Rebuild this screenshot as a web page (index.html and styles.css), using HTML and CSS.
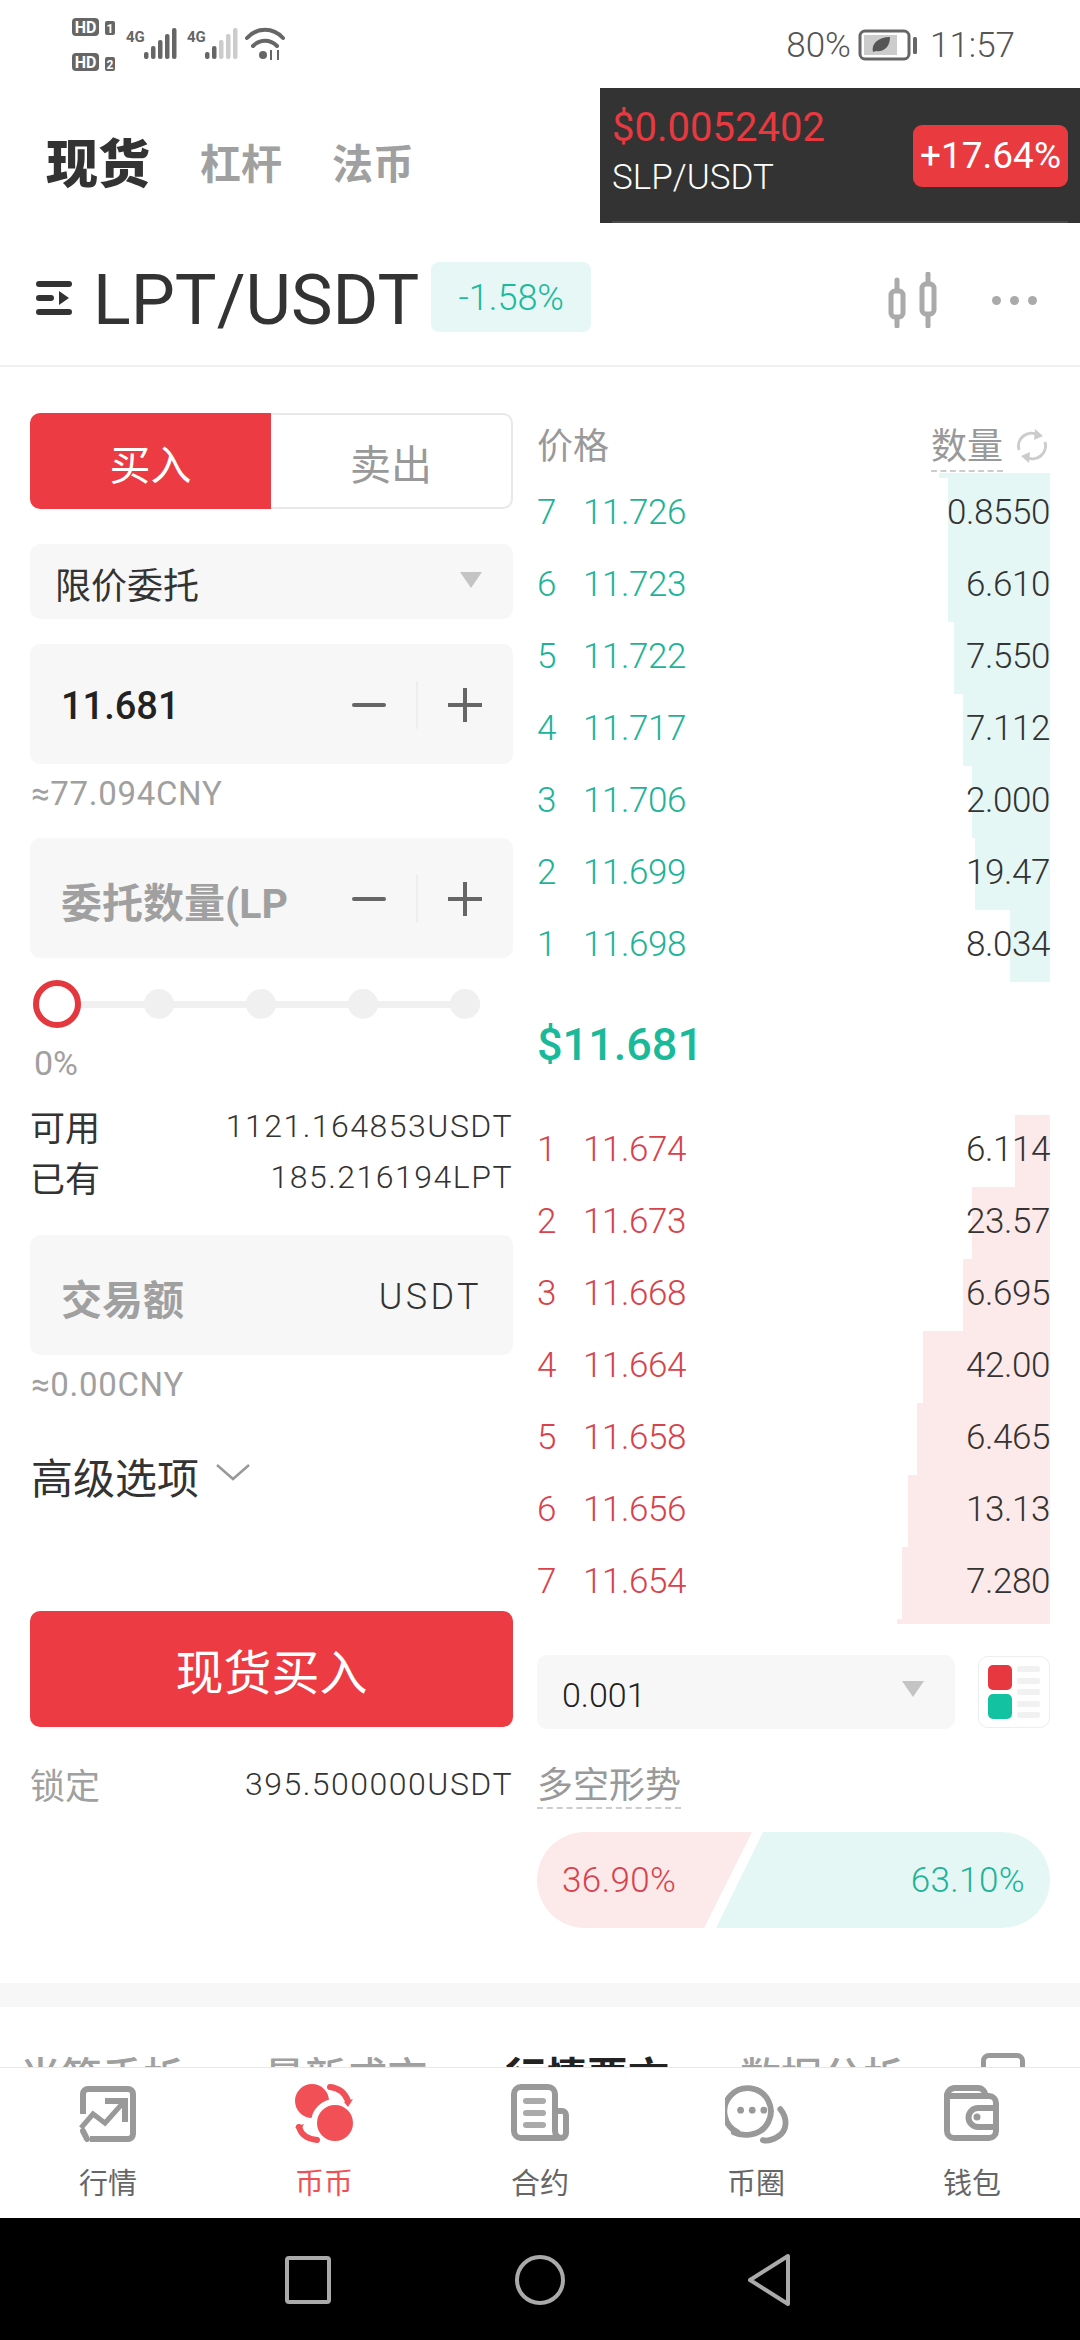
FILE: index.html
```html
<!DOCTYPE html>
<html lang="zh-CN">
<head>
  <meta charset="UTF-8" />
  <meta name="viewport" content="width=device-width, initial-scale=1.0"/>
  <title>LPT/USDT 现货</title>
  <link rel="stylesheet" href="styles.css">
</head>
<body>
  <!-- 状态栏 -->
  <div class="status-bar">
    <svg class="status-left" width="216" height="62" viewBox="0 0 216 62">
      <rect x="0" y="3" width="27" height="18" rx="4" fill="#666"/>
      <text x="13.5" y="17.5" class="hd-text">HD</text>
      <rect x="33" y="6" width="10" height="14" rx="2" fill="#666"/>
      <text x="38" y="17.5" class="sim-text">1</text>
      <rect x="0" y="38" width="27" height="18" rx="4" fill="#666"/>
      <text x="13.5" y="52.5" class="hd-text">HD</text>
      <rect x="33" y="42" width="10" height="14" rx="2" fill="#666"/>
      <text x="38" y="53.5" class="sim-text">2</text>
      <text x="54" y="27" class="net-text">4G</text>
      <g fill="#666">
        <rect x="72" y="37" width="4.5" height="7" rx="2"/>
        <rect x="79" y="31" width="4.5" height="13" rx="2"/>
        <rect x="86" y="25" width="4.5" height="19" rx="2"/>
        <rect x="93" y="19" width="4.5" height="25" rx="2"/>
        <rect x="100" y="13" width="4.5" height="31" rx="2"/>
      </g>
      <text x="115" y="27" class="net-text">4G</text>
      <rect x="133" y="37" width="4.5" height="7" rx="2" fill="#666"/>
      <rect x="140" y="31" width="4.5" height="13" rx="2" fill="#666"/>
      <g fill="#ccc">
        <rect x="147" y="25" width="4.5" height="19" rx="2"/>
        <rect x="154" y="19" width="4.5" height="25" rx="2"/>
        <rect x="161" y="13" width="4.5" height="31" rx="2"/>
      </g>
      <g fill="none" stroke="#666" stroke-width="4" stroke-linecap="round">
        <path d="M175 23C185 12 201 12 211 23"/>
        <path d="M181 31C188 24 198 24 205 31"/>
      </g>
      <circle cx="191" cy="40" r="4" fill="#666"/>
      <path d="M199 35v10M206 35v10" stroke="#666" stroke-width="2"/>
    </svg>
    <div class="status-right">
      <span>80%</span>
      <svg width="60" height="32" viewBox="0 0 60 32">
        <rect x="2" y="2" width="49" height="28" rx="5" fill="none" stroke="#666" stroke-width="3"/>
        <rect x="6" y="6" width="33" height="20" fill="#ccc"/>
        <path d="M15 23C13 15 20 8 32 8C32 18 26 23 18 22Z" fill="#555"/>
        <rect x="55" y="8" width="4" height="17" rx="1.5" fill="#666"/>
      </svg>
      <span class="status-time">11:57</span>
    </div>
  </div>

  <!-- 交易类型 + 悬浮行情 -->
  <div class="top-row">
    <div class="type-tabs">
      <span class="type-tab active">现货</span>
      <span class="type-tab">杠杆</span>
      <span class="type-tab">法币</span>
    </div>
    <div class="float-ticker">
      <div class="float-left">
        <div class="float-price">$0.0052402</div>
        <div class="float-pair">SLP/USDT</div>
      </div>
      <div class="float-change">+17.64%</div>
    </div>
  </div>

  <!-- 交易对 -->
  <div class="pair-row">
    <svg class="pair-menu" width="36" height="36" viewBox="0 0 36 36">
      <path d="M3 4H33M3 32H33M3 18H15" stroke="#333" stroke-width="6" stroke-linecap="round"/>
      <path d="M23 11L33 18L23 25Z" fill="#333"/>
    </svg>
    <span class="pair-name">LPT/USDT</span>
    <span class="pair-change">-1.58%</span>
    <svg class="pair-candle" width="50" height="56" viewBox="0 0 50 56">
      <g fill="none" stroke="#aaa" stroke-width="5" stroke-linecap="round">
        <path d="M9 8V54M40 2V54"/>
      </g>
      <g fill="#fff" stroke="#aaa" stroke-width="5">
        <rect x="3" y="19" width="12" height="26" rx="4"/>
        <rect x="34" y="12" width="12" height="30" rx="4"/>
      </g>
    </svg>
    <span class="pair-more"><i></i><i></i><i></i></span>
  </div>

  <div class="main">
    <div class="trade-area">
      <!-- 左侧下单 -->
      <div class="order-form">
        <div class="side-tabs">
          <div class="side-tab buy">买入</div>
          <div class="side-tab sell">卖出</div>
        </div>
        <div class="select-box order-type">
          <span>限价委托</span>
          <i class="arrow-down"></i>
        </div>
        <div class="input-box">
          <span class="input-value">11.681</span>
          <span class="stepper"><i class="minus"></i><i class="step-line"></i><i class="plus"></i></span>
        </div>
        <div class="hint">≈77.094CNY</div>
        <div class="input-box qty-box">
          <span class="input-holder">委托数量(LP</span>
          <span class="stepper"><i class="minus"></i><i class="step-line"></i><i class="plus"></i></span>
        </div>
        <div class="slider">
          <i class="slider-thumb"></i>
          <i class="slider-dot"></i>
          <i class="slider-dot"></i>
          <i class="slider-dot"></i>
          <i class="slider-dot"></i>
        </div>
        <div class="slider-label">0%</div>
        <div class="balance-row first"><span>可用</span><span class="balance-num">1121.164853USDT</span></div>
        <div class="balance-row"><span>已有</span><span class="balance-num">185.216194LPT</span></div>
        <div class="input-box total-box">
          <span class="input-holder">交易额</span>
          <span class="input-unit">USDT</span>
        </div>
        <div class="hint">≈0.00CNY</div>
        <div class="advanced">
          <span>高级选项</span>
          <svg width="36" height="20" viewBox="0 0 36 20"><path d="M2 3L18 17L34 3" fill="none" stroke="#999" stroke-width="2.5"/></svg>
        </div>
        <div class="submit-btn">现货买入</div>
        <div class="balance-row locked"><span class="locked-label">锁定</span><span class="balance-num">395.500000USDT</span></div>
      </div>

      <!-- 右侧盘口 -->
      <div class="book">
        <div class="book-head">
          <span class="book-head-label">价格</span>
          <span class="book-head-right">
            <span class="dashed book-head-label">数量</span>
            <svg width="32" height="34" viewBox="0 0 32 34">
              <g fill="none" stroke="#ccc" stroke-width="3">
                <path d="M3 21A13 13 0 0 1 22 6"/>
                <path d="M29 13A13 13 0 0 1 10 28"/>
              </g>
              <path d="M19 0L27 7L18 11Z M13 34L5 27L14 23Z" fill="#ccc"/>
            </svg>
          </span>
        </div>
        <div class="depth-stub ask-bg" style="width: 111px"></div>
        <div class="book-row ask"><i class="depth ask-bg" style="width: 102px"></i><span class="idx">7</span><span class="price">11.726</span><span class="qty">0.8550</span></div>
        <div class="book-row ask"><i class="depth ask-bg" style="width: 102px"></i><span class="idx">6</span><span class="price">11.723</span><span class="qty">6.610</span></div>
        <div class="book-row ask"><i class="depth ask-bg" style="width: 96px"></i><span class="idx">5</span><span class="price">11.722</span><span class="qty">7.550</span></div>
        <div class="book-row ask"><i class="depth ask-bg" style="width: 87px"></i><span class="idx">4</span><span class="price">11.717</span><span class="qty">7.112</span></div>
        <div class="book-row ask"><i class="depth ask-bg" style="width: 78px"></i><span class="idx">3</span><span class="price">11.706</span><span class="qty">2.000</span></div>
        <div class="book-row ask"><i class="depth ask-bg" style="width: 75px"></i><span class="idx">2</span><span class="price">11.699</span><span class="qty">19.47</span></div>
        <div class="book-row ask"><i class="depth ask-bg" style="width: 40px"></i><span class="idx">1</span><span class="price">11.698</span><span class="qty">8.034</span></div>
        <div class="mid-price">$11.681</div>
        <div class="book-row bid"><i class="depth bid-bg" style="width: 35px"></i><span class="idx">1</span><span class="price">11.674</span><span class="qty">6.114</span></div>
        <div class="book-row bid"><i class="depth bid-bg" style="width: 78px"></i><span class="idx">2</span><span class="price">11.673</span><span class="qty">23.57</span></div>
        <div class="book-row bid"><i class="depth bid-bg" style="width: 87px"></i><span class="idx">3</span><span class="price">11.668</span><span class="qty">6.695</span></div>
        <div class="book-row bid"><i class="depth bid-bg" style="width: 127px"></i><span class="idx">4</span><span class="price">11.664</span><span class="qty">42.00</span></div>
        <div class="book-row bid"><i class="depth bid-bg" style="width: 133px"></i><span class="idx">5</span><span class="price">11.658</span><span class="qty">6.465</span></div>
        <div class="book-row bid"><i class="depth bid-bg" style="width: 142px"></i><span class="idx">6</span><span class="price">11.656</span><span class="qty">13.13</span></div>
        <div class="book-row bid"><i class="depth bid-bg" style="width: 148px"></i><span class="idx">7</span><span class="price">11.654</span><span class="qty">7.280</span></div>
        <div class="depth-stub bid-bg" style="width: 153px"></div>
        <div class="book-tools">
          <div class="select-box step-select">
            <span>0.001</span>
            <i class="arrow-down"></i>
          </div>
          <div class="view-toggle">
            <div class="view-blocks"><i class="red"></i><i class="green"></i></div>
            <div class="view-lines"><i></i><i></i><i></i><i></i><i></i></div>
          </div>
        </div>
        <div class="trend-title"><span class="dashed">多空形势</span></div>
        <div class="ratio">
          <div class="ratio-long">36.90%</div>
          <div class="ratio-short">63.10%</div>
        </div>
      </div>
    </div>

    <div class="band"></div>

    <div class="detail-tabs">
      <span class="detail-tab">当笔手析</span>
      <span class="detail-tab">最新成交</span>
      <span class="detail-tab active">行情要文</span>
      <span class="detail-tab">数据分析</span>
      <i class="detail-icon"></i>
    </div>
  </div>

  <!-- 底部导航 -->
  <nav class="bottom-nav">
    <div class="nav-item">
      <svg width="60" height="60" viewBox="0 0 60 60">
        <g fill="none" stroke="#999" stroke-width="6">
          <path d="M5 30V10a5 5 0 0 1 5-5h40a5 5 0 0 1 5 5v40a5 5 0 0 1-5 5H12"/>
          <path d="M3 44L15 30L27 39L44 20" stroke-width="5"/>
          <path d="M30 17H47V35" stroke-linecap="square"/>
          <path d="M5 47L9 55" stroke-linecap="round"/>
        </g>
      </svg>
      <span>行情</span>
    </div>
    <div class="nav-item active">
      <svg width="60" height="60" viewBox="0 0 60 60">
        <circle cx="18" cy="17" r="17" fill="#f05056"/>
        <circle cx="41" cy="39" r="21" fill="#f05056" stroke="#fff" stroke-width="6"/>
        <g fill="none" stroke="#f05056" stroke-width="6" stroke-linecap="round">
          <path d="M36 3C45 4 51 9 54 17"/>
          <path d="M5 43C7 50 13 55 23 56"/>
        </g>
        <path d="M50 18L59 15L54 23Z M1 43L10 40L6 48Z" fill="#f05056"/>
      </svg>
      <span>币币</span>
    </div>
    <div class="nav-item">
      <svg width="60" height="60" viewBox="0 0 60 60">
        <g fill="none" stroke="#999" stroke-width="6">
          <path d="M50 54H11a7 7 0 0 1-7-7V10a7 7 0 0 1 7-7h27a7 7 0 0 1 7 7v37a7 7 0 0 0 7 7"/>
          <path d="M46 27H52a4 4 0 0 1 4 4V49a5 5 0 0 1-5 5"/>
        </g>
        <g fill="#aaa">
          <rect x="13" y="14" width="23" height="6" rx="3"/>
          <rect x="13" y="26" width="23" height="6" rx="3"/>
          <rect x="13" y="38" width="23" height="6" rx="3"/>
        </g>
      </svg>
      <span>合约</span>
    </div>
    <div class="nav-item">
      <svg class="nav-chat" width="68" height="62" viewBox="0 0 68 62">
        <path d="M12 50A24 24 0 1 1 26 52C20 53 14 53 8 50" fill="none" stroke="#999" stroke-width="6" stroke-linecap="round"/>
        <circle cx="15" cy="27" r="3.5" fill="#999"/>
        <circle cx="27" cy="27" r="3.5" fill="#999"/>
        <circle cx="39" cy="27" r="3.5" fill="#999"/>
        <path d="M56 26C64 36 63 48 54 54C48 58 42 59 38 58" fill="none" stroke="#999" stroke-width="6" stroke-linecap="round"/>
      </svg>
      <span>币圈</span>
    </div>
    <div class="nav-item">
      <svg width="60" height="60" viewBox="0 0 60 60">
        <g fill="none" stroke="#999" stroke-width="6">
          <path d="M5 13V47a7 7 0 0 0 7 7H47a7 7 0 0 0 7-7V19a7 7 0 0 0-7-7H5"/>
          <path d="M5 13a8 8 0 0 1 8-9H36a7 7 0 0 1 7 8"/>
          <path d="M54 24H36a9 9 0 0 0 0 19H54"/>
        </g>
        <circle cx="35" cy="33" r="3.5" fill="#999"/>
      </svg>
      <span>钱包</span>
    </div>
  </nav>

  <!-- 系统导航 -->
  <div class="system-bar">
    <svg width="540" height="54" viewBox="0 0 540 54">
      <g fill="none" stroke="#aaa" stroke-width="4" stroke-linejoin="round">
        <rect x="12" y="5" width="42" height="44" rx="2"/>
        <circle cx="265" cy="27" r="23"/>
        <path d="M513 3V51L475 27Z"/>
      </g>
    </svg>
  </div>
</body>
</html>
```

FILE: styles.css
```css
* {
  box-sizing: border-box;
}
html, body {
  margin: 0;
  padding: 0;
}
body {
  width: 1080px;
  height: 2340px;
  overflow: hidden;
  display: flex;
  flex-direction: column;
  background: #fff;
  color: #333;
  font-family: Roboto, 'Noto Sans CJK SC', sans-serif;
}
i {
  display: block;
  font-style: normal;
}

/* status bar */
.status-bar {
  height: 88px;
  flex: none;
  display: flex;
  justify-content: space-between;
  align-items: flex-start;
  padding: 15px 65px 0 72px;
}
.hd-text {
  font: 700 16px Roboto, sans-serif;
  fill: #fff;
  text-anchor: middle;
}
.sim-text {
  font: 700 12px Roboto, sans-serif;
  fill: #fff;
  text-anchor: middle;
}
.net-text {
  font: 700 15px Roboto, sans-serif;
  fill: #666;
}
.status-right {
  display: flex;
  align-items: center;
  height: 60px;
  gap: 7px;
  font-size: 35px;
  font-weight: 300;
  color: #555;
}
.status-time {
  margin-left: 5px;
}

/* type tabs + floating ticker */
.top-row {
  height: 135px;
  flex: none;
  display: flex;
  justify-content: space-between;
}
.type-tabs {
  display: flex;
  align-items: center;
  padding: 10px 0 0 46px;
  gap: 50px;
}
.type-tab {
  font-size: 41px;
  font-weight: 700;
  color: #a0a0a0;
}
.type-tab.active {
  font-size: 52px;
  font-weight: 900;
  color: #333;
}
.float-ticker {
  position: relative;
  width: 480px;
  background: #333;
  display: flex;
  justify-content: space-between;
  align-items: center;
  padding: 0 12px;
}
.float-ticker::after {
  content: '';
  position: absolute;
  left: 12px;
  right: 12px;
  bottom: 0;
  height: 2px;
  background: #4a4a4a;
}
.float-left {
  margin-top: -10px;
}
.float-price {
  font-size: 40px;
  line-height: 52px;
  color: #e7393f;
}
.float-pair {
  margin-top: 2px;
  font-size: 35px;
  line-height: 44px;
  font-weight: 300;
  color: #fff;
}
.float-change {
  width: 155px;
  height: 62px;
  background: #e93a40;
  border-radius: 9px;
  color: #fff;
  font-size: 37px;
  line-height: 62px;
  text-align: center;
}

/* pair row */
.pair-row {
  height: 144px;
  flex: none;
  display: flex;
  align-items: center;
  padding: 12px 43px 0 36px;
  border-bottom: 2px solid #f0f0f0;
}
.pair-menu {
  margin-top: -5px;
}
.pair-name {
  margin-left: 21px;
  font-size: 70px;
  color: #333;
}
.pair-change {
  width: 160px;
  height: 70px;
  margin: -6px 0 0 12px;
  background: #e6f7f5;
  border-radius: 8px;
  color: #1cb99b;
  font-size: 36px;
  font-weight: 300;
  line-height: 72px;
  text-align: center;
}
.pair-candle {
  margin-left: auto;
}
.pair-more {
  display: flex;
  gap: 9px;
  margin-left: 54px;
}
.pair-more i {
  width: 9px;
  height: 9px;
  border-radius: 50%;
  background: #aaa;
}

/* main */
.main {
  flex: 1;
  min-height: 0;
  overflow: hidden;
}
.trade-area {
  display: flex;
  justify-content: space-between;
  padding: 0 30px;
}
.order-form {
  width: 483px;
  padding-top: 46px;
}
.side-tabs {
  display: flex;
  height: 96px;
}
.side-tab {
  display: flex;
  align-items: center;
  justify-content: center;
  padding-top: 2px;
  font-size: 41px;
}
.side-tab.buy {
  width: 241px;
  background: #ec3b42;
  color: #fff;
  border-radius: 10px 0 0 10px;
}
.side-tab.sell {
  flex: 1;
  color: #999;
  border: 2px solid #e8e8e8;
  border-left: none;
  border-radius: 0 10px 10px 0;
}
.select-box {
  display: flex;
  align-items: center;
  justify-content: space-between;
  background: #f7f7f7;
  border-radius: 10px;
}
.order-type {
  height: 75px;
  margin-top: 35px;
  padding: 2px 31px 0 25px;
  font-size: 36px;
  color: #333;
}
.arrow-down {
  width: 0;
  height: 0;
  border-left: 11px solid transparent;
  border-right: 11px solid transparent;
  border-top: 16px solid #c4c4c4;
  margin-top: -6px;
}
.input-box {
  height: 120px;
  margin-top: 25px;
  display: flex;
  align-items: center;
  justify-content: space-between;
  background: #f7f7f7;
  border-radius: 10px;
  padding: 4px 31px 0;
}
.qty-box {
  margin-top: 18px;
}
.total-box {
  margin-top: 33px;
}
.input-value {
  font-size: 38px;
  font-weight: 500;
  color: #222;
}
.input-holder {
  width: 232px;
  overflow: hidden;
  white-space: nowrap;
  font-size: 41px;
  font-weight: 700;
  color: #a0a0a0;
}
.input-unit {
  font-size: 36px;
  font-weight: 300;
  letter-spacing: 3.4px;
  color: #333;
}
.stepper {
  display: flex;
  align-items: center;
  margin-top: -2px;
}
.minus {
  width: 34px;
  height: 4px;
  background: #666;
  border-radius: 2px;
}
.step-line {
  width: 2px;
  height: 48px;
  margin: 0 30px 0 30px;
  background: #eee;
}
.plus {
  width: 34px;
  height: 34px;
  background:
    linear-gradient(#666, #666) center / 100% 4px no-repeat,
    linear-gradient(#666, #666) center / 4px 100% no-repeat;
}
.hint {
  height: 56px;
  padding: 2px 0 0 1px;
  line-height: 56px;
  font-size: 33px;
  letter-spacing: .7px;
  color: #a0a0a0;
}
.slider {
  height: 48px;
  width: 438px;
  margin: 22px 0 0 12px;
  display: flex;
  align-items: center;
  justify-content: space-between;
  background: linear-gradient(#f0f0f0, #f0f0f0) center / 100% 7px no-repeat;
}
.slider-thumb {
  flex: none;
  width: 48px;
  height: 48px;
  margin: 0 -9px;
  border-radius: 50%;
  background: #fff;
  border: 6px solid #e4383f;
}
.slider-dot {
  width: 30px;
  height: 30px;
  border-radius: 50%;
  background: #f0f0f0;
}
.slider-label {
  height: 66px;
  padding: 2px 0 0 4px;
  line-height: 66px;
  font-size: 34px;
  color: #a0a0a0;
}
.balance-row {
  display: flex;
  justify-content: space-between;
  align-items: center;
  height: 51px;
  font-size: 35px;
  color: #333;
}
.balance-row.first {
  margin-top: 6px;
}
.balance-num {
  font-size: 32px;
  font-weight: 300;
  letter-spacing: 1.5px;
  color: #333;
}
.advanced {
  height: 60px;
  margin-top: 34px;
  display: flex;
  align-items: center;
  gap: 16px;
  padding-left: 1px;
  font-size: 42px;
  color: #333;
}
.advanced svg {
  margin-top: -6px;
}
.submit-btn {
  height: 116px;
  margin-top: 106px;
  display: flex;
  align-items: center;
  justify-content: center;
  background: #ec3b42;
  border-radius: 10px;
  color: #fff;
  font-size: 48px;
}
.balance-row.locked {
  margin-top: 31px;
}
.locked-label {
  color: #a0a0a0;
}

/* order book */
.book {
  width: 513px;
}
.book-head {
  height: 106px;
  display: flex;
  justify-content: space-between;
  align-items: flex-start;
  padding-top: 57px;
}
.book-head-label {
  font-size: 36px;
  line-height: 46px;
  color: #999;
}
.book-head-right {
  display: flex;
  align-items: flex-start;
  gap: 13px;
  margin-right: 2px;
}
.book-head-right svg {
  margin-top: 5px;
}
.dashed {
  display: inline-block;
  border-bottom: 2px dashed #ccc;
}
.depth-stub {
  height: 5px;
  margin-left: auto;
}
.ask-bg {
  background: #e5f7f5;
}
.bid-bg {
  background: #fce9ea;
}
.book-row {
  position: relative;
  height: 72px;
  display: flex;
  align-items: center;
  padding-bottom: 4px;
  font-size: 35px;
  letter-spacing: -.4px;
  font-weight: 300;
}
.depth {
  position: absolute;
  top: 0;
  right: 0;
  bottom: 0;
}
.idx {
  width: 46px;
  position: relative;
}
.price {
  position: relative;
}
.qty {
  position: relative;
  margin-left: auto;
  color: #333;
}
.ask .idx, .ask .price {
  color: #1cb398;
}
.bid .idx, .bid .price {
  color: #d8424a;
}
.mid-price {
  height: 133px;
  display: flex;
  align-items: center;
  padding-bottom: 8px;
  font-size: 45px;
  font-weight: 500;
  color: #19b99a;
}
.book-tools {
  display: flex;
  justify-content: space-between;
  align-items: center;
  margin-top: 31px;
}
.step-select {
  width: 418px;
  height: 74px;
  padding: 0 31px 0 25px;
  font-size: 34px;
  font-weight: 300;
  color: #222;
}
.step-select span {
  margin-top: 6px;
}
.view-toggle {
  width: 72px;
  height: 72px;
  display: flex;
  justify-content: space-between;
  padding: 8px 9px;
  border: 1px solid #eee;
  border-radius: 10px;
}
.view-blocks {
  display: flex;
  flex-direction: column;
  justify-content: space-between;
}
.view-blocks i {
  width: 24px;
  height: 25px;
  border-radius: 5px;
}
.view-blocks .red {
  background: #e8383f;
}
.view-blocks .green {
  background: #12c2a0;
}
.view-lines {
  display: flex;
  flex-direction: column;
  justify-content: space-between;
  padding: 1px 0;
}
.view-lines i {
  width: 23px;
  height: 6px;
  border-radius: 2px;
  background: #f1f1f1;
}
.trend-title {
  height: 78px;
  padding-top: 36px;
  font-size: 36px;
  color: #999;
}
.trend-title .dashed {
  line-height: 42px;
}
.ratio {
  display: flex;
  height: 96px;
  margin-top: 25px;
  margin-bottom: 55px;
  font-size: 35px;
  font-weight: 300;
  line-height: 98px;
  letter-spacing: .4px;
}
.ratio-long {
  flex: none;
  width: 215px;
  padding-left: 25px;
  background: #fce9ea;
  color: #d8424a;
  border-radius: 48px 0 0 48px;
  clip-path: polygon(0 0, 100% 0, 167px 100%, 0 100%);
}
.ratio-short {
  flex: 1;
  margin-left: -36px;
  padding-right: 25px;
  text-align: right;
  background: #e5f7f5;
  color: #1cb398;
  border-radius: 0 48px 48px 0;
  clip-path: polygon(47px 0, 100% 0, 100% 100%, 0 100%);
}

.band {
  height: 24px;
  background: #f7f7f7;
}

/* tabs cut off by the bottom nav */
.detail-tabs {
  display: grid;
  grid-template-columns: 244px 241px 235px 241px auto;
  padding: 46px 0 0 20px;
}
.detail-tab {
  padding-top: 5px;
  font-size: 41px;
  line-height: 41px;
  font-weight: 500;
  color: #a0a0a0;
}
.detail-tab.active {
  font-weight: 700;
  color: #222;
}
.detail-icon {
  width: 44px;
  height: 50px;
  border: 5px solid #999;
  border-radius: 8px;
}

/* bottom nav */
.bottom-nav {
  height: 151px;
  flex: none;
  display: grid;
  grid-template-columns: repeat(5, 216px);
  border-top: 1px solid #e8e8e8;
  background: #fff;
}
.nav-item {
  display: flex;
  flex-direction: column;
  align-items: center;
  padding-top: 16px;
  font-size: 29px;
  color: #666;
}
.nav-item svg {
  height: 60px;
  flex: none;
}
.nav-item .nav-chat {
  margin-left: 5px;
}
.nav-item span {
  margin-top: 20px;
  line-height: 40px;
}
.nav-item.active {
  color: #ef5055;
}

.system-bar {
  height: 122px;
  flex: none;
  display: flex;
  justify-content: center;
  padding: 35px 0 0 10px;
  background: #000;
}
```
